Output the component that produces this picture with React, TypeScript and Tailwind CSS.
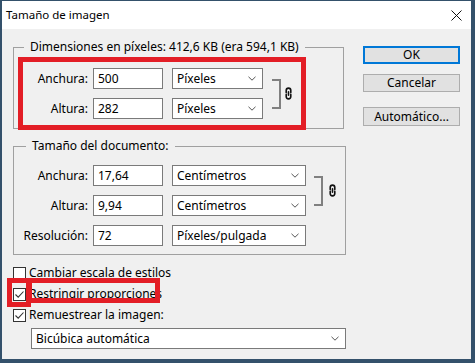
import type { ReactNode } from "react";

function Chevron() {
  return (
    <svg width="8" height="5" viewBox="0 0 8 5" className="shrink-0">
      <path d="M0.5 0.8 L4 4.2 L7.5 0.8" fill="none" stroke="#555" strokeWidth="1" />
    </svg>
  );
}

function LinkIcon() {
  return (
    <svg width="7" height="13" viewBox="0 0 7 13" className="shrink-0">
      <g fill="none" stroke="#111" strokeWidth="1.6" strokeLinecap="round">
        <path d="M1.2 5.6 V3.4 a2.3 2.3 0 0 1 4.6 0 V5.6" />
        <path d="M1.2 7.4 V9.6 a2.3 2.3 0 0 0 4.6 0 V7.4" />
        <path d="M3.5 4.8 V8.2" />
      </g>
    </svg>
  );
}

function TextBox({ value }: { value: string }) {
  return (
    <div className="ml-[5px] flex h-[21px] w-[70px] items-center border border-[#7a7a7a] bg-white pl-[4px]">
      {value}
    </div>
  );
}

function Select({ value, width }: { value: string; width: string }) {
  return (
    <div className={`flex h-[21px] items-center justify-between border border-[#7a7a7a] bg-white pl-[4px] pr-[6px] ${width}`}>
      <span>{value}</span>
      <Chevron />
    </div>
  );
}

function Row({ label, value, unit, unitWidth }: { label: string; value: string; unit: string; unitWidth: string }) {
  return (
    <div className="flex h-[21px] items-center">
      <span className="w-[74px] text-right">{label}</span>
      <TextBox value={value} />
      <div className="ml-[9px]">
        <Select value={unit} width={unitWidth} />
      </div>
    </div>
  );
}

function Bracket({ gap }: { gap: string }) {
  return (
    <div className="flex items-center">
      <div className="h-[30px] w-[9px] border-y-2 border-r-2 border-[#808080]" />
      <div className={gap}>
        <LinkIcon />
      </div>
    </div>
  );
}

function Check({ checked, children }: { checked?: boolean; children: ReactNode }) {
  return (
    <div className="flex h-[21px] items-center">
      <div className="flex h-[13px] w-[13px] items-center justify-center border border-[#333] bg-white">
        {checked && (
          <svg width="11" height="11" viewBox="0 0 11 11">
            <path d="M1.5 5.5 L4.2 8.2 L9.5 2.5" fill="none" stroke="#333" strokeWidth="1.1" />
          </svg>
        )}
      </div>
      <span className="mb-[1px] ml-[3px]">{children}</span>
    </div>
  );
}

function Button({ children, primary, className }: { children: ReactNode; primary?: boolean; className?: string }) {
  return (
    <div
      className={`flex w-[97px] items-center justify-center bg-[#e1e1e1] ${
        primary ? "border-2 border-[#0078d7]" : "border border-[#adadad]"
      } ${className ?? ""}`}
    >
      {children}
    </div>
  );
}

export default function App() {
  return (
    <div className="h-[363px] w-[475px] bg-[#34516b] pb-[4px] pl-[2px] pr-[4px] pt-[1px] font-['Noto_Sans',sans-serif] text-[12px] leading-[16px] text-black">
      <div className="flex h-full flex-col bg-[#f0f0f0]">
        <div className="flex h-[28px] shrink-0 items-center justify-between bg-white pl-[4px] pr-[9px]">
          <span className="text-[11.5px]">Tamaño de imagen</span>
          <svg width="11" height="11" viewBox="0 0 11 11">
            <path d="M0.5 0.5 L10.5 10.5 M10.5 0.5 L0.5 10.5" stroke="#111" strokeWidth="1" />
          </svg>
        </div>

        <div className="relative flex flex-1 pl-[11px] pt-[10px]">
          <div className="flex w-[333px] flex-col">
            <fieldset className="w-[331px] border border-[#a0a0a0] px-0 pb-[9px]">
              <legend className="ml-[10px] px-[6px]">Dimensiones en píxeles: 412,6 KB (era 594,1 KB)</legend>
              <div className="mt-[13px] flex items-center">
                <div className="flex flex-col gap-[9px]">
                  <Row label="Anchura:" value="500" unit="Píxeles" unitWidth="w-[91px]" />
                  <Row label="Altura:" value="282" unit="Píxeles" unitWidth="w-[91px]" />
                </div>
                <div className="ml-[9px]">
                  <Bracket gap="ml-[4px]" />
                </div>
              </div>
            </fieldset>

            <fieldset className="mt-[9px] w-[333px] border border-[#a0a0a0] px-0 pb-[8px]">
              <legend className="ml-[12px] px-[6px]">Tamaño del documento:</legend>
              <div className="mt-[11px] flex items-start">
                <div className="flex flex-col gap-[9px]">
                  <Row label="Anchura:" value="17,64" unit="Centímetros" unitWidth="w-[134px]" />
                  <Row label="Altura:" value="9,94" unit="Centímetros" unitWidth="w-[134px]" />
                  <Row label="Resolución:" value="72" unit="Píxeles/pulgada" unitWidth="w-[134px]" />
                </div>
                <div className="ml-[8px] flex h-[51px] items-center">
                  <Bracket gap="ml-[6px]" />
                </div>
              </div>
            </fieldset>

            <div className="mt-[8px] flex flex-col">
              <Check>Cambiar escala de estilos</Check>
              <Check checked>Restringir proporciones</Check>
              <Check checked>Remuestrear la imagen:</Check>
            </div>

            <div className="ml-[18px] mt-[2px]">
              <Select value="Bicúbica automática" width="w-[315px]" />
            </div>
          </div>

          <div className="ml-[17px] mt-[7px] flex flex-col">
            <Button primary className="h-[18px]">OK</Button>
            <Button className="mt-[10px] h-[18px]">Cancelar</Button>
            <Button className="mt-[15px] h-[19px]">Automático...</Button>
          </div>

          <div className="absolute left-[16px] top-[28px] h-[73px] w-[288px] border-[5px] border-[#e31e26]" />
          <div className="absolute left-[5px] top-[249px] h-[29px] w-[24px] border-[5px] border-[#e31e26]" />
          <div className="absolute left-[25px] top-[249px] h-[25px] w-[133px] border-[5px] border-[#e31e26]" />
        </div>
      </div>
    </div>
  );
}
